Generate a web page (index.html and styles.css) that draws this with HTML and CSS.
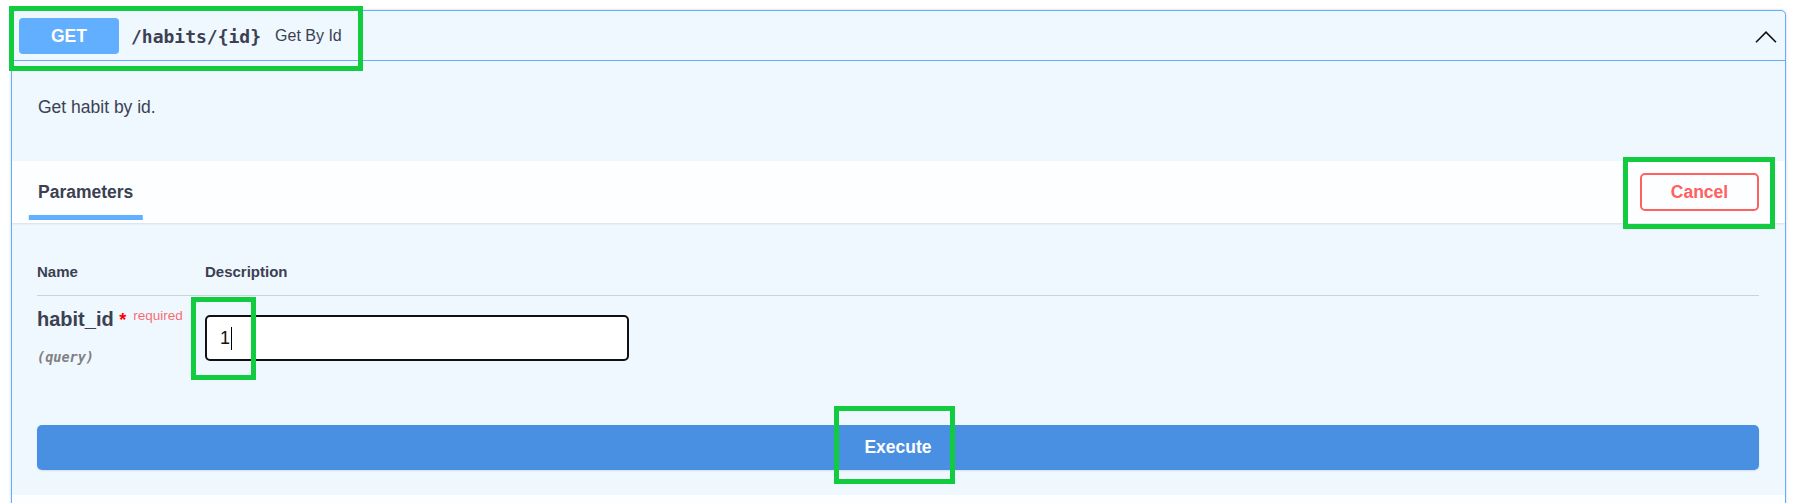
FILE: index.html
```html
<!DOCTYPE html>
<html lang="en">
<head>
<meta charset="utf-8">
<title>GET /habits/{id}</title>
<link rel="stylesheet" href="styles.css">
</head>
<body>
<div class="page">
  <div class="opblock">
    <div class="summary">
      <span class="method">GET</span>
      <span class="path">/habits/{id}</span>
      <span class="summary-desc">Get By Id</span>
      <svg class="chevron" width="22" height="12" viewBox="0 0 22 12" aria-hidden="true">
        <polyline points="1,11.2 11,1.2 21,11.2" fill="none" stroke="#111" stroke-width="1.6"/>
      </svg>
    </div>
    <div class="desc">Get habit by id.</div>
    <div class="section-header">
      <div class="tab"><span class="tab-label">Parameters</span></div>
      <button class="btn-cancel">Cancel</button>
    </div>
    <div class="params">
      <div class="param-grid">
        <div class="th">Name</div>
        <div class="th">Description</div>
        <div class="td-name">
          <div class="pname">habit_id <span class="star">*</span><span class="req">required</span></div>
          <div class="pin">(query)</div>
        </div>
        <div class="td-desc">
          <div class="input"><span class="val">1</span><span class="caret"></span></div>
        </div>
      </div>
    </div>
    <div class="execute-wrap">
      <button class="btn-execute">Execute</button>
    </div>
    <div class="section-header resp"></div>
  </div>
  <div class="mark mark-1"></div>
  <div class="mark mark-2"></div>
  <div class="mark mark-3"></div>
  <div class="mark mark-4"></div>
</div>
</body>
</html>
```

FILE: styles.css
```css
html, body {
  margin: 0;
  padding: 0;
  background: #ffffff;
  font-family: "Liberation Sans", Arial, sans-serif;
  color: #3b4151;
  overflow: hidden;
}

.page {
  position: relative;
  padding: 10px 20px 0 11px;
}

.opblock {
  border: 1px solid #61affe;
  border-radius: 5px;
  background: #eff7ff;
  box-shadow: 0 0 3px rgba(0, 0, 0, 0.19);
  overflow: hidden;
}

.summary {
  display: flex;
  align-items: center;
  padding: 7px 8px 6px 7px;
  border-bottom: 1px solid #61affe;
}

.method {
  display: flex;
  align-items: center;
  justify-content: center;
  width: 100px;
  height: 36px;
  border-radius: 4px;
  background: #61affe;
  color: #ffffff;
  font-weight: 700;
  font-size: 17.5px;
}

.path {
  padding: 0 14px 0 12px;
  font-family: "DejaVu Sans Mono", "Liberation Mono", monospace;
  font-weight: 700;
  font-size: 18px;
  color: #3b4151;
}

.summary-desc {
  flex: 1;
  font-size: 16px;
  color: #3b4151;
}

.chevron {
  display: block;
  margin-top: 1px;
}

.desc {
  padding: 35px 26px 43px 26px;
  font-size: 17.5px;
  line-height: 22px;
  color: #3b4151;
}

.section-header {
  display: flex;
  align-items: center;
  justify-content: space-between;
  height: 62px;
  padding: 0 26px 0 26px;
  background: rgba(255, 255, 255, 0.8);
  box-shadow: 0 1px 2px rgba(0, 0, 0, 0.1);
}

.tab-label {
  position: relative;
  display: inline-block;
  font-weight: 700;
  font-size: 17.5px;
  line-height: 20px;
  color: #3b4151;
}

.tab-label::after {
  content: "";
  position: absolute;
  left: 50%;
  bottom: -18px;
  width: 120%;
  height: 5px;
  transform: translateX(-50%);
  background: #61affe;
}

.btn-cancel {
  width: 119px;
  height: 38px;
  border: 2px solid #ff6060;
  border-radius: 5px;
  background: transparent;
  color: #ff6060;
  font-family: "Liberation Sans", Arial, sans-serif;
  font-weight: 700;
  font-size: 17.5px;
  padding: 0;
}

.params {
  padding: 39px 26px 59px 25px;
}

.param-grid {
  display: grid;
  grid-template-columns: 168px 1fr;
}

.th {
  font-weight: 700;
  font-size: 15px;
  line-height: 20px;
  padding-bottom: 13px;
  border-bottom: 1px solid rgba(59, 65, 81, 0.2);
  color: #3b4151;
}

.td-name {
  padding-top: 11px;
}

.pname {
  font-weight: 700;
  font-size: 20px;
  line-height: 24px;
  color: #3b4151;
  white-space: nowrap;
}

.star {
  color: #ff0000;
  font-size: 18px;
}

.req {
  position: relative;
  top: -6px;
  padding-left: 7px;
  font-weight: 400;
  font-size: 13.5px;
  color: rgba(255, 0, 0, 0.6);
}

.pin {
  margin-top: 14px;
  font-family: "DejaVu Sans Mono", "Liberation Mono", monospace;
  font-style: italic;
  font-weight: 700;
  font-size: 13.5px;
  line-height: 18px;
  color: #808080;
}

.td-desc {
  padding-top: 19px;
}

.input {
  display: flex;
  align-items: center;
  box-sizing: border-box;
  width: 424px;
  height: 46px;
  padding: 0 13px;
  border: 2px solid #111111;
  border-radius: 5px;
  background: #ffffff;
  font-size: 18px;
  color: #111111;
}

.caret {
  display: inline-block;
  width: 1px;
  height: 23px;
  margin-left: 1px;
  background: #000000;
}

.execute-wrap {
  padding: 0 26px 25px 25px;
}

.btn-execute {
  display: block;
  width: 100%;
  height: 45px;
  border: 0;
  border-radius: 5px;
  background: #4990e2;
  color: #ffffff;
  font-family: "Liberation Sans", Arial, sans-serif;
  font-weight: 700;
  font-size: 17.5px;
  box-shadow: 0 1px 2px rgba(0, 0, 0, 0.1);
}

.mark {
  position: absolute;
  box-sizing: border-box;
  border: 5px solid #11cc3e;
}

.mark-1 { left: 9px; top: 6px; width: 354px; height: 65px; }
.mark-2 { left: 1623px; top: 157px; width: 152px; height: 72px; }
.mark-3 { left: 191px; top: 297px; width: 65px; height: 83px; }
.mark-4 { left: 834px; top: 406px; width: 121px; height: 78px; }
```
